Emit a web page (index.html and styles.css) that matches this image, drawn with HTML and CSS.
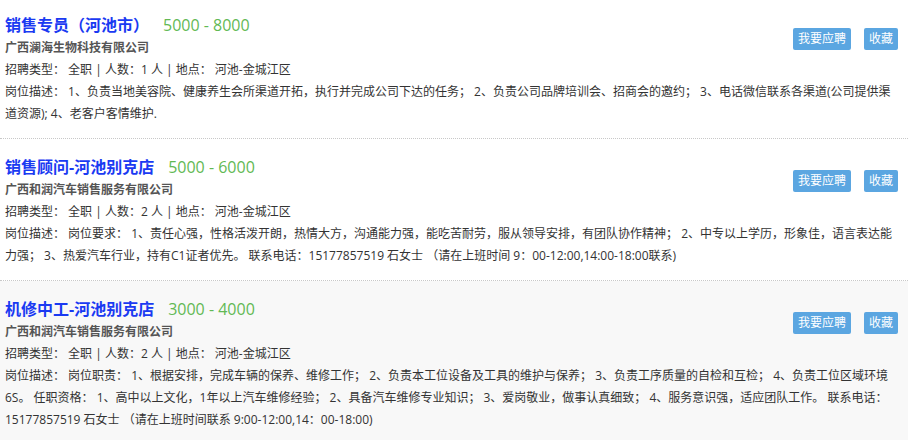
FILE: index.html
```html
<!DOCTYPE html>
<html lang="zh-CN">
<head>
  <meta charset="UTF-8" />
  <title>招聘信息</title>
  <link rel="stylesheet" href="styles.css">
</head>
<body>

  <ul class="job-list">
    <li class="job-item">
      <div class="job-actions">
        <a class="btn" href="#">我要应聘</a>
        <a class="btn" href="#">收藏</a>
      </div>
      <h3 class="job-title"><a href="#">销售专员（河池市）</a><span class="salary">5000 - 8000</span></h3>
      <p class="company">广西澜海生物科技有限公司</p>
      <p class="job-meta">招聘类型： 全职 | 人数：1 人 | 地点： 河池-金城江区</p>
      <p class="job-desc">岗位描述： 1、负责当地美容院、健康养生会所渠道开拓，执行并完成公司下达的任务； 2、负责公司品牌培训会、招商会的邀约； 3、电话微信联系各渠道(公司提供渠道资源); 4、老客户客情维护.</p>
    </li>
    <li class="job-item">
      <div class="job-actions">
        <a class="btn" href="#">我要应聘</a>
        <a class="btn" href="#">收藏</a>
      </div>
      <h3 class="job-title"><a href="#">销售顾问-河池别克店</a><span class="salary">5000 - 6000</span></h3>
      <p class="company">广西和润汽车销售服务有限公司</p>
      <p class="job-meta">招聘类型： 全职 | 人数：2 人 | 地点： 河池-金城江区</p>
      <p class="job-desc">岗位描述： 岗位要求： 1、责任心强，性格活泼开朗，热情大方，沟通能力强，能吃苦耐劳，服从领导安排，有团队协作精神； 2、中专以上学历，形象佳，语言表达能力强； 3、热爱汽车行业，持有C1证者优先。 联系电话：15177857519 石女士 （请在上班时间 9：00-12:00,14:00-18:00联系)</p>
    </li>
    <li class="job-item active">
      <div class="job-actions">
        <a class="btn" href="#">我要应聘</a>
        <a class="btn" href="#">收藏</a>
      </div>
      <h3 class="job-title"><a href="#">机修中工-河池别克店</a><span class="salary">3000 - 4000</span></h3>
      <p class="company">广西和润汽车销售服务有限公司</p>
      <p class="job-meta">招聘类型： 全职 | 人数：2 人 | 地点： 河池-金城江区</p>
      <p class="job-desc">岗位描述： 岗位职责： 1、根据安排，完成车辆的保养、维修工作； 2、负责本工位设备及工具的维护与保养； 3、负责工序质量的自检和互检； 4、负责工位区域环境6S。 任职资格： 1、高中以上文化，1年以上汽车维修经验； 2、具备汽车维修专业知识； 3、爱岗敬业，做事认真细致； 4、服务意识强，适应团队工作。 联系电话：15177857519 石女士 （请在上班时间联系 9:00-12:00,14：00-18:00)</p>
    </li>
  </ul>

</body>
</html>
```

FILE: styles.css
```css
* {
  box-sizing: border-box;
  margin: 0;
  padding: 0;
}

body {
  font-family: 'Open Sans', 'Noto Sans CJK SC', sans-serif;
  font-size: 12px;
  color: #333;
  background-color: #ffffff;
}

a {
  text-decoration: none;
}

.job-list {
  list-style: none;
  margin-top: -3px;
}

.job-item {
  padding: 16px 5px 13px;
  border-bottom: 1px dotted #c8c8c8;
}

.job-item.active {
  background-color: #f8f8f8;
  border-bottom: none;
}

.job-actions {
  float: right;
  display: flex;
  gap: 13px;
  margin-top: 15px;
  margin-right: 5px;
}

.btn {
  display: block;
  height: 22px;
  line-height: 22px;
  padding: 0 5px;
  font-size: 12px;
  color: #ffffff;
  background-color: #5ba6e1;
  border-radius: 2px;
}

.job-title {
  font-size: 16px;
  line-height: 24px;
  font-weight: bold;
}

.job-title a {
  color: #1a3af2;
}

.salary {
  margin-left: 14px;
  font-weight: normal;
  color: #62b954;
}

.company {
  line-height: 22px;
  font-weight: bold;
  color: #555;
}

.job-meta {
  line-height: 22px;
}

.job-desc {
  line-height: 22px;
  padding-right: 9px;
}
```
